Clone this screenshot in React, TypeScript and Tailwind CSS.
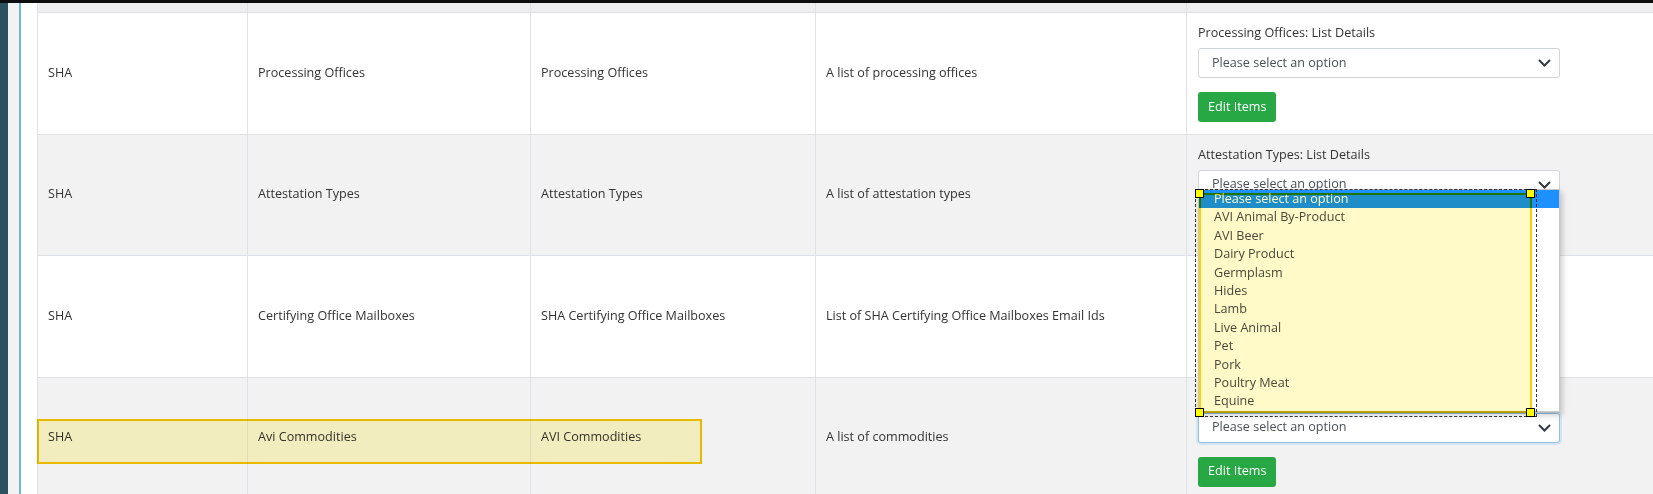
import clsx from "clsx";

type Row = {
  group: string;
  name: string;
  title: string;
  description: string;
  label: string;
  focused?: boolean;
};

const rows: Row[] = [
  {
    group: "SHA",
    name: "Processing Offices",
    title: "Processing Offices",
    description: "A list of processing offices",
    label: "Processing Offices: List Details",
  },
  {
    group: "SHA",
    name: "Attestation Types",
    title: "Attestation Types",
    description: "A list of attestation types",
    label: "Attestation Types: List Details",
  },
  {
    group: "SHA",
    name: "Certifying Office Mailboxes",
    title: "SHA Certifying Office Mailboxes",
    description: "List of SHA Certifying Office Mailboxes Email Ids",
    label: "Certifying Office Mailboxes: List Details",
  },
  {
    group: "SHA",
    name: "Avi Commodities",
    title: "AVI Commodities",
    description: "A list of commodities",
    label: "Avi Commodities: List Details",
    focused: true,
  },
];

const options = [
  "Please select an option",
  "AVI Animal By-Product",
  "AVI Beer",
  "Dairy Product",
  "Germplasm",
  "Hides",
  "Lamb",
  "Live Animal",
  "Pet",
  "Pork",
  "Poultry Meat",
  "Equine",
];

const cols = "grid grid-cols-[210px_283px_285px_371px_1fr]";

function Chevron() {
  return (
    <svg width="13" height="8" viewBox="0 0 13 8" fill="none">
      <path d="M1 1l5.5 5.5L12 1" stroke="#343a40" strokeWidth="2" />
    </svg>
  );
}

function SelectBox({ focused }: { focused?: boolean }) {
  return (
    <div
      className={clsx(
        "flex h-[30px] w-[362px] items-center justify-between rounded-[3px] border bg-white pl-[13px] pr-[8px] text-[#495057]",
        focused
          ? "border-[#8ec0e4] shadow-[0_0_0_2px_rgba(128,189,255,0.25)]"
          : "border-[#ced4da]"
      )}
    >
      <span>Please select an option</span>
      <Chevron />
    </div>
  );
}

function TableRow({ row, striped }: { row: Row; striped: boolean }) {
  const cell = "flex items-center border-r border-[#dee2e6] px-[10px]";
  return (
    <div
      className={clsx(
        cols,
        "h-[121.5px] border-b border-[#dee2e6]",
        striped ? "bg-[#f2f2f2]" : "bg-white"
      )}
    >
      <div className={cell}>{row.group}</div>
      <div className={cell}>{row.name}</div>
      <div className={cell}>{row.title}</div>
      <div className={cell}>{row.description}</div>
      <div className="flex flex-col items-start justify-center px-[11px]">
        <div className="mb-[6px] leading-[18px]">{row.label}</div>
        <SelectBox focused={row.focused} />
        <button className="mt-[14px] h-[30px] rounded-[3px] bg-[#28a745] px-[10px] text-white">
          Edit Items
        </button>
      </div>
    </div>
  );
}

export default function App() {
  return (
    <div className="relative h-[494px] w-[1653px] overflow-hidden bg-white font-['Open_Sans',sans-serif] text-[12.6px] text-[#333]">
      <div className="h-[3px] bg-[#0d0d0d]" />
      <div className="flex h-[491px]">
        <div className="w-[8px] bg-[#2d525f]" />
        <div className="w-[11px] bg-[#f2f2f2]" />
        <div className="w-[2px] bg-[#74b6da]" />
        <div className="w-[16px] bg-white" />
        <div className="flex-1 border-l border-[#dee2e6]">
          <div className={clsx(cols, "h-[10px] border-b border-[#dee2e6] bg-[#efefef]")}>
            <div className="border-r border-[#dee2e6]" />
            <div className="border-r border-[#dee2e6]" />
            <div className="border-r border-[#dee2e6]" />
            <div className="border-r border-[#dee2e6]" />
            <div />
          </div>
          {rows.map((row, i) => (
            <TableRow key={row.name} row={row} striped={i % 2 === 1} />
          ))}
        </div>
      </div>

      {/* open native dropdown of the last select */}
      <ul className="absolute left-[1198px] top-[189px] w-[362px] border border-[#c8c8c8] bg-white shadow-[2px_3px_6px_rgba(0,0,0,0.22)]">
        {options.map((opt, i) => (
          <li
            key={opt}
            className={clsx(
              "h-[18.4px] pl-[15px] leading-[18.4px]",
              i === 0 ? "bg-[#1e90ff] text-white" : "text-[#4a4a4a]"
            )}
          >
            {opt}
          </li>
        ))}
      </ul>

      {/* inspector highlights */}
      <div className="absolute left-[1199px] top-[193px] h-[220px] w-[333px] border-2 border-[#ffd000] bg-[#fffac8] mix-blend-multiply" />
      <div className="absolute left-[1195px] top-[189px] h-[228px] w-[342px] border border-dashed border-[#333]" />
      <div className="absolute left-[1195px] top-[189px] size-[9px] border border-black bg-[#ffff00]" />
      <div className="absolute left-[1526px] top-[189px] size-[9px] border border-black bg-[#ffff00]" />
      <div className="absolute left-[1195px] top-[408px] size-[9px] border border-black bg-[#ffff00]" />
      <div className="absolute left-[1526px] top-[408px] size-[9px] border border-black bg-[#ffff00]" />
      <div className="absolute left-[37px] top-[419px] h-[45px] w-[665px] border-2 border-[#f4c400] bg-[#fffac8] mix-blend-multiply" />
    </div>
  );
}
